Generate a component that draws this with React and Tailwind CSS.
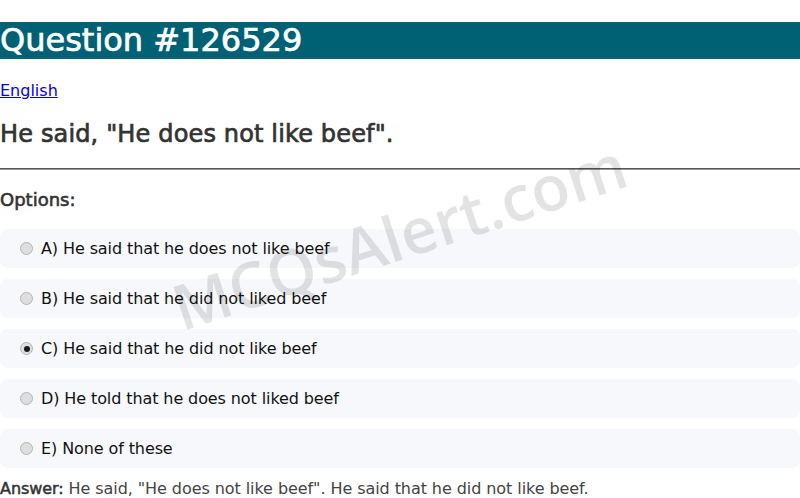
import React from "react";

const options = [
  { id: "A", text: "A) He said that he does not like beef", checked: false },
  { id: "B", text: "B) He said that he did not liked beef", checked: false },
  { id: "C", text: "C) He said that he did not like beef", checked: true },
  { id: "D", text: "D) He told that he does not liked beef", checked: false },
  { id: "E", text: "E) None of these", checked: false },
];

function Radio({ checked }) {
  return (
    <span className="flex h-[13px] w-[13px] shrink-0 items-center justify-center rounded-full border border-[#b4b4b4] bg-[#dedede]">
      {checked && <span className="h-[6px] w-[6px] rounded-full bg-[#1a1a1a]" />}
    </span>
  );
}

export default function App() {
  return (
    <div
      className="relative h-[498px] w-[800px] overflow-hidden bg-white"
      style={{ fontFamily: '"DejaVu Sans", Verdana, sans-serif' }}
    >
      <h1 className="mt-[22px] bg-[#006174] text-[32px] font-normal leading-[37px] text-white [-webkit-text-stroke:0.7px_currentColor]">
        Question #126529
      </h1>
      <div className="mt-[22px] text-[16px] leading-[19px]">
        <a href="#" className="text-[#0000ee] underline">
          English
        </a>
      </div>
      <h2 className="mt-[20px] text-[24px] font-normal leading-[28px] tracking-[0.15px] text-[#333] [-webkit-text-stroke:0.7px_currentColor]">
        He said, "He does not like beef".
      </h2>
      <div className="mt-[20px] h-[2px] border-t border-[#555] bg-[#999]" />
      <div className="mt-[19px] text-[18px] font-normal leading-[21px] text-[#333] [-webkit-text-stroke:0.6px_currentColor]">
        Options:
      </div>
      <div className="mt-[19px] flex flex-col gap-[11px]">
        {options.map((o) => (
          <div
            key={o.id}
            className="flex h-[39px] items-center gap-[8px] rounded-[8px] bg-[#f7f8fc] pl-[20px] text-[16px] text-[#111]"
          >
            <Radio checked={o.checked} />
            <span className="tracking-[-0.1px]">{o.text}</span>
          </div>
        ))}
      </div>
      <p className="mt-[11px] text-[16px] leading-[19px] tracking-[-0.07px] text-[#444]">
        <span className="text-[#333] [-webkit-text-stroke:0.5px_currentColor]">Answer:</span> He said, "He does not like beef". He said that he did not like beef.
      </p>
      <div
        className="pointer-events-none absolute left-[399px] top-[235px] -translate-x-1/2 -translate-y-1/2 -rotate-[18deg] whitespace-nowrap text-[63px] font-semibold leading-none text-black/[0.11]"
        style={{ fontFamily: '"Open Sans", "Noto Sans", sans-serif' }}
      >
        MCQsAlert.com
      </div>
    </div>
  );
}
